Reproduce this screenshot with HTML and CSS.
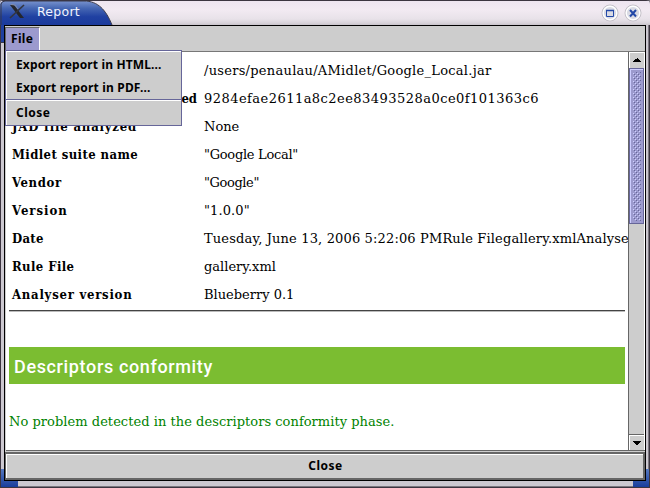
FILE: index.html
```
<!DOCTYPE html>
<html lang="en">
<head>
<meta charset="utf-8">
<title>Report</title>
<link rel="stylesheet" href="styles.css">
</head>
<body>
<div class="window">
  <header class="titlebar">
    <svg class="tab" width="114" height="25" viewBox="0 0 114 25">
      <defs><linearGradient id="blue" x1="0" y1="0" x2="0" y2="1"><stop offset="0" stop-color="#7892ce"/><stop offset=".3" stop-color="#4667b3"/><stop offset=".65" stop-color="#2041a2"/><stop offset="1" stop-color="#1b3a9b"/></linearGradient></defs>
      <path d="M0 25V4Q1 1 4 1H84C98 1 106 10 112 25Z" fill="url(#blue)"/>
      <path d="M1 25V4Q2 1 5 1H84C98 1 106 10 112 25" fill="none" stroke="#37384a"/>
      <path d="M10 5h4l10 13h-4Z" fill="#25262c"/><path d="M24 5L10 18" stroke="#34353e" stroke-width="1.6"/><path d="M11 4.500l4 .5 3 4" stroke="#858da6" fill="none"/>
    </svg>
    <h1 class="title">Report</h1>
    <div class="controls">
      <svg width="18" height="18" viewBox="0 0 18 18"><circle cx="9" cy="9" r="8" fill="#d0ced6" stroke="#c4c0c8"/><circle cx="9" cy="9" r="6.800" fill="#dadbe4" stroke="#fff" stroke-width="1.400"/><path d="M5.500 6.500h7v6h-7z" fill="none" stroke="#2449a8"/><path d="M5 6.500h8" stroke="#2449a8" stroke-width="1.500"/></svg>
      <svg width="18" height="18" viewBox="0 0 18 18"><circle cx="9" cy="9" r="8" fill="#d0ced6" stroke="#c4c0c8"/><circle cx="9" cy="9" r="6.800" fill="#dadbe4" stroke="#fff" stroke-width="1.400"/><path d="M6 6l6 6.500M12 6l-6 6.500" stroke="#2449a8" stroke-width="2"/></svg>
    </div>
  </header>
  <div class="client">
    <nav class="menubar">
      <div class="menu">File</div>
      <div class="popup">
        <div class="item html">Export report in HTML...</div>
        <div class="item pdf">Export report in PDF...</div>
        <div class="item close">Close</div>
      </div>
    </nav>
    <div class="scrollpane">
      <main class="report">
        <dl class="facts">
          <dt></dt><dd class="path">/users/penaulau/AMidlet/Google_Local.jar</dd>
          <dt class="end">ed</dt><dd class="hash">9284efae2611a8c2ee83493528a0ce0f101363c6</dd>
          <dt class="l-jad">JAD file analyzed</dt><dd>None</dd>
          <dt class="l-name">Midlet suite name</dt><dd class="v-name">"Google Local"</dd>
          <dt class="l-vendor">Vendor</dt><dd class="v-vendor">"Google"</dd>
          <dt class="l-version">Version</dt><dd class="v-version">"1.0.0"</dd>
          <dt class="l-date">Date</dt><dd class="v-date">Tuesday, June 13, 2006 5:22:06 PMRule Filegallery.xmlAnalyse</dd>
          <dt class="l-rule">Rule File</dt><dd>gallery.xml</dd>
          <dt class="l-analyser">Analyser version</dt><dd>Blueberry 0.1</dd>
        </dl>
        <hr class="rule">
        <h2 class="section">Descriptors conformity</h2>
        <p class="result">No problem detected in the descriptors conformity phase.</p>
      </main>
      <div class="scrollbar">
        <div class="arrow"><svg width="9" height="5" viewBox="0 0 9 5"><path d="M4 0h1v1h1v1h1v1h1v1H0V3h1V2h1V1h2z"/></svg></div>
        <div class="track"><div class="thumb"></div></div>
        <div class="arrow down"><svg width="9" height="5" viewBox="0 0 9 5"><path d="M0 0h8v1H7v1H6v1H5v1H3V3H2V2H1V1H0z"/></svg></div>
      </div>
    </div>
    <button class="button">Close</button>
  </div>
  <i class="corner top"></i><i class="corner left"></i><i class="corner right"></i>
</div>
</body>
</html>
```
FILE: styles.css
```
* { box-sizing: border-box; }
body { margin: 0; background: #77737b; }
.window {
  position: relative;
  width: 650px;
  height: 488px;
  padding: 0 4px 7px;
  background: #ccc8d0;
  border-radius: 4px 4px 0 0;
  box-shadow: inset 1px 0 #3c3540, inset -1px -1px #3c3540, inset -2px -2px #7a767e;
}
.titlebar {
  display: flex;
  align-items: center;
  justify-content: space-between;
  position: relative;
  height: 25px;
  margin: 0 -4px;
  padding: 0 8px 0 37px;
  background: linear-gradient(#3c3540 1px, #eee5f0 1px, #f2eaf2 10px, #e8e2e9 19px, #d8d3da 23px, #c8c3ca);
  border-radius: 4px 4px 0 0;
}
.tab { position: absolute; left: 0; top: 0; }
.title {
  position: relative;
  margin: 0;
  font: 12.500px/20px "DejaVu Sans", sans-serif;
  letter-spacing: .25px;
  color: #f1f4ff;
  padding-bottom: 1px;
}
.controls { display: flex; gap: 5px; }
.controls svg { display: block; }
.client {
  position: relative;
  z-index: 1;
  display: flex;
  flex-direction: column;
  height: 456px;
  border: 1px solid #000;
  background: #cdcdcd;
  color: #000;
}
.menubar {
  position: relative;
  display: flex;
  height: 26px;
  flex: none;
  padding: 1px 0 0;
  border-bottom: 1px solid #777;
  font: bold 12px/22px "Noto Sans", sans-serif;
}
.menu {
  width: 35px;
  height: 23px;
  padding-left: 5px;
  background: #9c9ace;
  border: solid;
  border-width: 1px 1px 0;
  border-color: #666 #fff #666 #666;
  line-height: 21px;
  letter-spacing: .3px;
}
.popup {
  position: absolute;
  left: 0;
  top: 24px;
  z-index: 2;
  width: 177px;
  height: 76px;
  border: 1px solid #666699;
  background: #cdcdcd;
  box-shadow: inset 1px 1px #fff;
  padding-top: 2px;
}
.item { height: 23px; padding-left: 10px; line-height: 23px; white-space: nowrap; }
.html { letter-spacing: .14px; }
.pdf { letter-spacing: .19px; }
.item.close { border-top: 1px solid #666699; box-shadow: inset 0 1px #fff; height: 26px; line-height: 25px; letter-spacing: .5px; }
.scrollpane {
  display: flex;
  height: 399px;
  flex: none;
  margin-left: 1px;
  border-bottom: 1px solid #666;
  background: #fff;
}
.report {
  flex: 1;
  min-width: 0;
  overflow: hidden;
  padding: 5px 3px 0;
  font: 13px/28px "DejaVu Serif", serif;
}
.facts {
  display: grid;
  grid-template-columns: 192px 425px;
  grid-auto-rows: 28px;
  margin: 0;
  padding-left: 3px;
  white-space: nowrap;
}
.facts dt { font-family: "DejaVu Serif Condensed", "DejaVu Serif", serif; font-weight: bold; }
.facts .end { text-align: right; padding-right: 7px; }
.facts dd { margin: 0; }
.path { letter-spacing: .27px; }
.hash { letter-spacing: .46px; }
.l-jad { letter-spacing: .8px; }
.l-name { letter-spacing: .4px; }
.l-vendor { letter-spacing: .65px; }
.l-version { letter-spacing: 1px; }
.l-date { letter-spacing: .3px; }
.l-rule { letter-spacing: .4px; }
.l-analyser { letter-spacing: .75px; }
.v-name { letter-spacing: -.28px; }
.v-vendor { letter-spacing: -.4px; }
.v-version { letter-spacing: .1px; }
.v-date { letter-spacing: .15px; }
.rule { margin: 1px 0 35px; border: solid; border-width: 1px 0; border-color: #444 transparent #bbb; height: 2px; }
.section {
  margin: 0;
  height: 37px;
  padding-left: 5px;
  background: #7bbd31;
  color: #fff;
  font: 500 18px/39px Roboto, sans-serif;
  letter-spacing: .64px;
}
.result { margin: 24px 0 0; color: #008200; white-space: nowrap; letter-spacing: .04px; }
.scrollbar { position: relative; display: flex; flex-direction: column; width: 17px; border-left: 1px solid #666; border-right: 1px solid #fff; background: #cdcdcd; }
.arrow { display: flex; align-items: center; justify-content: center; height: 16px; border-top: 1px solid #fff; border-left: 1px solid #fff; background: #cdcdcd; }
.arrow svg { display: block; }
.down { height: 15px; box-shadow: 0 -1px #666; }
.track { flex: 1; }
.thumb {
  height: 156px;
  border: 1px solid #666699;
  background:
    linear-gradient(#cfcfff, #cfcfff) 2px 3px / 1px 1px no-repeat,
    conic-gradient(#c6c6fa 25%, transparent 0) 1px 4px / 4px 4px,
    #9090c6;
  background:
    radial-gradient(circle at .5px .5px, #cfcfff .6px, transparent .7px) 3px 4px / 4px 4px,
    radial-gradient(circle at .5px .5px, #cfcfff .6px, transparent .7px) 5px 6px / 4px 4px,
    radial-gradient(circle at .5px .5px, #666699 .6px, transparent .7px) 4px 5px / 4px 4px,
    radial-gradient(circle at .5px .5px, #666699 .6px, transparent .7px) 6px 7px / 4px 4px,
    #9c9ace;
  box-shadow: inset 1px 1px #ceceff, inset -2px -2px #9c9ace, inset 3px 3px #9c9ace;
}
.button {
  flex: 1;
  margin: 1px 0 0;
  border: 2px solid #666;
  border-left-width: 1px;
  box-shadow: inset 1px 1px #fff;
  background: #cdcdcd;
  color: #000;
  padding: 0 0 0 2px;
  font: bold 12px/22px "Noto Sans", sans-serif;
  letter-spacing: .5px;
}
.corner { position: absolute; bottom: 1px; height: 18px; width: 17px; background: linear-gradient(#5578c0, #193d9b); }
.left { left: 1px; }
.right { right: 1px; width: 16px; }
.top { left: 1px; top: 25px; bottom: auto; width: 3px; background: #1f40a0; border-bottom: 1px solid #37384a; }
```
